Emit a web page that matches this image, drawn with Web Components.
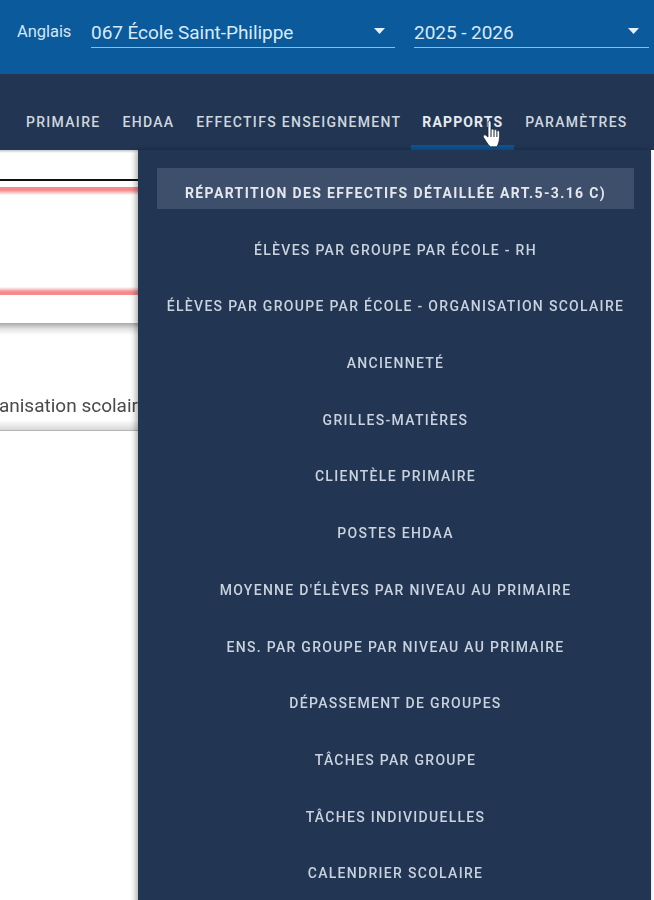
<!DOCTYPE html>
<html lang="fr">
<head>
<meta charset="utf-8">
<title>Rapports</title>
<style>
html, body { margin: 0; height: 900px; overflow: hidden; background: #fff; }
body { font-family: Roboto, "Liberation Sans", sans-serif; }
</style>
</head>
<body>
<app-shell>
  <top-bar slot="top">
    <span slot="lang">Anglais</span>
    <select-field style="--w:304px" label="067 École Saint-Philippe"></select-field>
    <select-field style="--w:235px" label="2025 - 2026"></select-field>
  </top-bar>
  <nav-bar slot="nav">
    <nav-tab>PRIMAIRE</nav-tab>
    <nav-tab>EHDAA</nav-tab>
    <nav-tab>EFFECTIFS ENSEIGNEMENT</nav-tab>
    <nav-tab active>RAPPORTS</nav-tab>
    <nav-tab>PARAMÈTRES</nav-tab>
  </nav-bar>
  <page-content slot="content"></page-content>
  <report-menu slot="menu">
    <menu-entry active>RÉPARTITION DES EFFECTIFS DÉTAILLÉE ART.5-3.16 C)</menu-entry>
    <menu-entry>ÉLÈVES PAR GROUPE PAR ÉCOLE - RH</menu-entry>
    <menu-entry>ÉLÈVES PAR GROUPE PAR ÉCOLE - ORGANISATION SCOLAIRE</menu-entry>
    <menu-entry>ANCIENNETÉ</menu-entry>
    <menu-entry>GRILLES-MATIÈRES</menu-entry>
    <menu-entry>CLIENTÈLE PRIMAIRE</menu-entry>
    <menu-entry>POSTES EHDAA</menu-entry>
    <menu-entry>MOYENNE D'ÉLÈVES PAR NIVEAU AU PRIMAIRE</menu-entry>
    <menu-entry>ENS. PAR GROUPE PAR NIVEAU AU PRIMAIRE</menu-entry>
    <menu-entry>DÉPASSEMENT DE GROUPES</menu-entry>
    <menu-entry>TÂCHES PAR GROUPE</menu-entry>
    <menu-entry>TÂCHES INDIVIDUELLES</menu-entry>
    <menu-entry>CALENDRIER SCOLAIRE</menu-entry>
  </report-menu>
  <hand-cursor slot="cursor"></hand-cursor>
</app-shell>

<script>
class AppShell extends HTMLElement {
    constructor() {
        super();
        this.attachShadow({ mode: 'open' }).innerHTML = `
<style>
:host { display: block; position: relative; width: 654px; height: 900px; overflow: hidden; filter: blur(0.4px); }
::slotted([slot="menu"]) { position: absolute; left: 138px; top: 150px; }
::slotted([slot="cursor"]) { position: absolute; left: 482px; top: 119px; }
</style>
<slot name="top"></slot>
<slot name="nav"></slot>
<slot name="content"></slot>
<slot name="menu"></slot>
<slot name="cursor"></slot>`;
    }
}

class TopBar extends HTMLElement {
    constructor() {
        super();
        this.attachShadow({ mode: 'open' }).innerHTML = `
<style>
:host { display: flex; align-items: flex-start; height: 74px; box-sizing: border-box; background: #0a5a9c; padding: 20px 0 0 17px; color: #d5e6f5; }
.lang { font-size: 16.5px; line-height: 24px; letter-spacing: -0.05px; width: 74px; white-space: nowrap; }
.fields { display: flex; gap: 19px; }
</style>
<div class="lang"><slot name="lang"></slot></div>
<div class="fields"><slot></slot></div>`;
    }
}

class SelectField extends HTMLElement {
    constructor() {
        super();
        this.attachShadow({ mode: 'open' }).innerHTML = `
<style>
:host { display: flex; justify-content: space-between; width: var(--w); height: 28px; box-sizing: border-box; border-bottom: 1px solid #8dbde6; color: #d9e9f7; font-size: 19px; line-height: 24px; letter-spacing: -0.05px; white-space: nowrap; }
.label { padding-top: 1px; }
svg { width: 11px; height: 6px; margin: 8px 10px 0 0; flex: none; }
</style>
<span class="label"></span>
<svg viewBox="0 0 11 6"><path d="M0 0h11L5.500 6z" fill="#e6f0f9"/></svg>`;
        this.shadowRoot.querySelector('.label').textContent = this.getAttribute('label');
    }
}

class NavBar extends HTMLElement {
    constructor() {
        super();
        this.attachShadow({ mode: 'open' }).innerHTML = `
<style>
:host { display: flex; height: 76px; box-sizing: border-box; background: #223654; padding: 23px 0 0 15px; }
</style>
<slot></slot>`;
    }
}

class NavTab extends HTMLElement {
    constructor() {
        super();
        this.attachShadow({ mode: 'open' }).innerHTML = `
<style>
:host { display: block; box-sizing: border-box; height: 53px; padding: 15px 11px 0; font-size: 14px; font-weight: 500; line-height: 20px; letter-spacing: 1.3px; color: #cfd6df; white-space: nowrap; border-bottom: 5px solid transparent; }
:host([active]) { margin-left: -1px; color: #e6eaef; font-weight: 700; letter-spacing: 1.15px; border-bottom-color: #0c5596; }
</style>
<slot></slot>`;
    }
}

class PageContent extends HTMLElement {
    constructor() {
        super();
        this.attachShadow({ mode: 'open' }).innerHTML = `
<style>
:host { display: block; width: 138px; overflow: hidden; }
.table { height: 173px; box-sizing: border-box; padding-top: 29px; background: linear-gradient(#c4c7cb, #fff 3px); }
.black { height: 2px; background: #111; }
.red { height: 8px; }
.first { margin-top: 6px; background: linear-gradient(#f58a8d 40%, #fff); }
.second { margin-top: 92px; background: linear-gradient(#fff, #f58a8d 60%); }
.name { height: 108px; box-sizing: border-box; padding-top: 71px; font-size: 19px; line-height: 24px; color: #4a4a4a; white-space: nowrap; display: flex; justify-content: flex-end; overflow: hidden; border-bottom: 1px solid #b5b5b5; background: linear-gradient(#a9a9a9, #e4e4e4 6px, #fff 12px, #fff calc(100% - 10px), #d8d8d8); }
</style>
<div class="table">
  <div class="black"></div>
  <div class="red first"></div>
  <div class="red second"></div>
</div>
<div class="name"><span>anisation scolair</span></div>`;
    }
}

class ReportMenu extends HTMLElement {
    constructor() {
        super();
        this.attachShadow({ mode: 'open' }).innerHTML = `
<style>
:host { display: flex; flex-direction: column; gap: 15.7px; width: 513px; height: 780px; box-sizing: border-box; padding: 18px 17px 18px 19px; background: #223654; box-shadow: -2px 0 6px rgba(0,0,0,.35); }
</style>
<slot></slot>`;
    }
}

class MenuEntry extends HTMLElement {
    constructor() {
        super();
        this.attachShadow({ mode: 'open' }).innerHTML = `
<style>
:host { display: flex; flex: none; align-items: center; justify-content: center; height: 41px; box-sizing: border-box; padding-top: 9px; font-size: 14px; font-weight: 500; letter-spacing: 1.3px; color: #c9d2dd; white-space: nowrap; }
:host([active]) { background: #3e4f6b; color: #e4e8ee; font-weight: 700; letter-spacing: 1.37px; }
</style>
<slot></slot>`;
    }
}

class HandCursor extends HTMLElement {
    constructor() {
        super();
        this.attachShadow({ mode: 'open' }).innerHTML = `
<style>
:host { display: block; width: 22px; height: 30px; }
svg { display: block; width: 100%; height: 100%; }
</style>
<svg viewBox="0 0 22 30"><path d="M6 3c0-1.800 3-1.800 3 0v7.500c.9-1 2.700-.7 3 .5.9-.8 2.700-.4 2.900.9.9-.6 2.600-.2 2.700 1.100.2 3.500 0 6.500-.6 9.500-.4 2-1.200 3.800-2.200 5.300H8.500c-1.600-1.200-3-3.200-4.500-5.500L1.400 18.200c-.9-1.600 1.100-3.100 2.500-2L6 18z" fill="#fff" stroke="#1a2536" stroke-width=".8"/><path d="M9 10.500V18M12 11v7M14.900 12v6" stroke="#1a2536" stroke-width="1" fill="none"/></svg>`;
    }
}

customElements.define('app-shell', AppShell);
customElements.define('top-bar', TopBar);
customElements.define('select-field', SelectField);
customElements.define('nav-bar', NavBar);
customElements.define('nav-tab', NavTab);
customElements.define('page-content', PageContent);
customElements.define('report-menu', ReportMenu);
customElements.define('menu-entry', MenuEntry);
customElements.define('hand-cursor', HandCursor);
</script>
</body>
</html>
